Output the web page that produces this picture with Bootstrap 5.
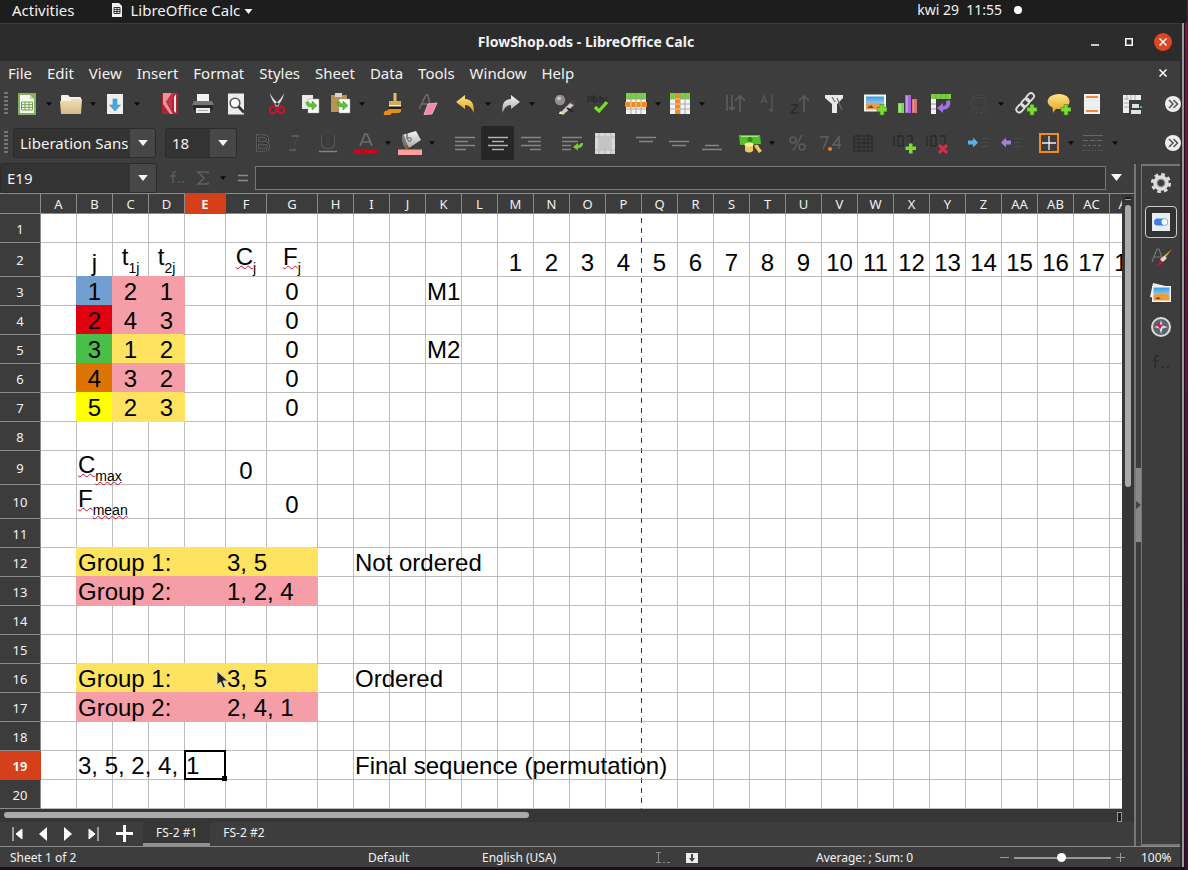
<!DOCTYPE html>
<html lang="en">
<head>
<meta charset="utf-8">
<meta name="viewport" content="width=device-width, initial-scale=1">
<title>FlowShop.ods - LibreOffice Calc</title>
<link rel="stylesheet" href="https://cdn.jsdelivr.net/npm/bootstrap@5.3.0/dist/css/bootstrap.min.css">
<style>
:root{--panel:#3d3d3d;--edge:#8b8b8b;--ink:#f2f2f2;--accent:#d5401b}
body{font-family:"Noto Sans","Open Sans",sans-serif;font-size:14px;line-height:20px;color:var(--ink);background:#25101f}
button{font:inherit;color:inherit;background:none;border:0;padding:0}
svg{display:block;flex:none}
.desk{padding-right:7px;padding-bottom:3px;background:linear-gradient(#7a1439,#3b0f30) right/3px 100% no-repeat,#1c0d1a}
.shell{background:var(--panel);border-right:1px solid #2b2b2b;box-shadow:1px 0 #2b2b2b,3px 0 #999}
.panelbar{height:23px;background:#1d1d1d;margin-right:-7px;padding-bottom:4px;position:relative}
.panelbar a,.menus a{color:var(--ink);text-decoration:none;font-size:15px}
.clock{padding-right:165px}
.titlebar{height:38px;background:#2d2c2c;border-top:1px solid #3b3b3b;font-weight:700;padding-bottom:2px}
.winspace{flex:1 1 0}
.winbtns{gap:16px;padding-right:8px}
.winbtns button{width:18px;height:18px;display:grid;place-items:center}
.winbtns .shut{background:#dc4620;border-radius:50%}
.menus{height:25px;padding:0 8px 2px}
.menus .nav{gap:15px}
.tools{height:36px;padding-left:4px;padding-right:3px}
.tools.fmt{height:42px}
.grip{width:4px;height:24px;margin-right:5px;background:repeating-linear-gradient(#777 0 2px,transparent 2px 4px)}
.tb{width:33px;height:34px;display:grid;place-items:center;flex:none}
.tb.main{width:28px}
.tb.drop{width:16px}
.tb.on{background:#262626;border-radius:2px}
.gap8{width:8px;flex:none}
.combo{height:30px;border:1px solid #2b2b2b;border-radius:3px;background:#333;display:flex;overflow:hidden}
.combo input,.line-in{background:#333;color:var(--ink);border:0;outline:0;min-width:0;width:100%;padding:0 0 0 6px}
.combo input{font-size:15px}
.combo button{width:26px;flex:none;background:#474747;display:grid;place-items:center}
.c-font{width:143px;margin-right:9px}.c-size{width:72px}.c-font button{width:25px}
.fbar{height:29px;padding-bottom:2px}
.c-name{width:157px;height:30px;margin-right:6px}
.work{min-width:0}
.line-in{height:24px;border:1px solid #777;margin-left:4px}
.sheet{overflow:hidden;background:#fff;min-width:0}
.grid{table-layout:fixed;border-collapse:separate;border-spacing:0;width:max(100%,1146px);color:#000;font-family:"Liberation Sans",Arial,sans-serif;font-size:24px;line-height:25px}
.grid col{width:36px}
.grid col.rh{width:41px}.grid col.w41{width:41px}.grid col.w51{width:51px}.grid col.rest{width:auto}
.grid col.brk{background:repeating-linear-gradient(transparent 0 5px,#333 5px 10px) right/1px 100% no-repeat}
.grid th{background:#3c3c3c;color:var(--ink);font:400 13px/18px "Noto Sans","Open Sans",sans-serif;text-align:center;vertical-align:middle;padding:0;border-right:1px solid var(--edge);border-bottom:1px solid var(--edge);overflow:hidden}
.grid thead th{height:21px;border-top:1px solid var(--edge)}
.grid tbody th{padding-top:1px}
.grid th.cur{background:var(--accent);font-weight:700;border-color:var(--accent)}
.grid td{height:29px;padding:0 1px 1px;vertical-align:bottom;white-space:nowrap;border-right:1px solid #bdbdbd;border-bottom:1px solid #bdbdbd}
.grid tr.tall td{height:34px}
.grid td.pb{border-right-color:transparent}
.grid td.mid{text-align:center}
.grid td.low{line-height:27px;vertical-align:top}
.grid td.fill{background:var(--f);border-color:var(--f);box-shadow:-1px -1px 0 var(--f)}
.grid td.pick{position:relative}
.pick i{position:absolute;inset:-1px;border:2px solid #000}
.pick i::after{content:"";position:absolute;right:-3px;bottom:-3px;width:5px;height:5px;background:#000}
.ptrbox{position:relative;height:25px}
.ptr{position:absolute;left:30px;top:4px}
.grid sub{font-size:14px;line-height:0;vertical-align:baseline;position:relative;top:8px;bottom:auto}
.sp{text-decoration:underline wavy #c8102e 1px;text-decoration-skip-ink:none;text-underline-offset:0}
.vbar{width:12px;flex:none;background:#363636;padding:3px 3px 0;border-top:1px solid var(--edge)}
.vbar b{display:block;height:3px;background:#1c1c1c;border-bottom:1px solid #999;margin-bottom:5px}
.vbar span{display:block;height:46%;width:6px;border-radius:3px;background:#aaa}
.hbar{height:13px;background:#363636;padding:3px 12px 0 4px;display:flex;justify-content:space-between}
.hbar span{width:47%;height:6px;border-radius:3px;background:#aaa}
.hbar b{width:5px;height:10px;background:#1c1c1c;border:1px solid #999}
.tabs{height:24px;font-size:12px;padding-left:5px}
.tabs .step{width:25px;height:24px;padding-bottom:1px;display:grid;place-items:center}
.tabs .add{width:38px}
.tabs .tab{height:24px;padding:0 13px;border-bottom:3px solid transparent;line-height:21px}
.tabs .tab.active{background:#363636;border-bottom-color:#8f8f8f}
.split{width:8px;flex:none;border-left:2px solid #777;border-right:1px solid #777;display:flex;align-items:center}
.split span{width:5px;height:74px;background:#888;display:grid;place-items:center}
.side{width:38px;flex:none;border-top:2px solid #777;border-bottom:2px solid #777;padding-top:1px;gap:3px}
.side button{width:32px;height:32px;display:grid;place-items:center}
.side .on{border:1px solid #ccc;border-radius:4px;background:#333;margin-top:4px}
.status{height:21px;border-top:1px solid var(--edge);font-size:12px;line-height:21px;display:grid;grid-template-columns:358fr 114fr 174fr 160fr 184fr 180px;padding-left:10px}
.zoomer{appearance:none;background:transparent;width:97px;height:14px;margin:0 5px}
.zoomer::-webkit-slider-runnable-track{height:2px;background:#999}
.zoomer::-webkit-slider-thumb{-webkit-appearance:none;width:9px;height:9px;border-radius:50%;background:#fff;margin-top:-4px}
</style>
</head>
<body>
<svg width="0" height="0" class="position-absolute" aria-hidden="true">
<defs>
<linearGradient id="gGold" x1="0" y1="0" x2="0" y2="1"><stop offset="0" stop-color="#ffe58a"/><stop offset="1" stop-color="#e0a11c"/></linearGradient>
<linearGradient id="gGrey" x1="0" y1="0" x2="0" y2="1"><stop offset="0" stop-color="#f4f4f4"/><stop offset="1" stop-color="#a9a9a9"/></linearGradient>
<linearGradient id="gSand" x1="0" y1="0" x2="0" y2="1"><stop offset="0" stop-color="#f3dfb9"/><stop offset="1" stop-color="#d8b987"/></linearGradient>
<linearGradient id="gSky" x1="0" y1="0" x2="0" y2="1"><stop offset="0" stop-color="#3b9be0"/><stop offset="1" stop-color="#d6efff"/></linearGradient>
</defs>
<symbol id="new" viewBox="0 0 24 24"><rect x="3" y="1" width="18" height="22" rx="1" fill="#83b064"/><path d="M5 3h10l4 4v14H5z" fill="#f5f9f0"/><path d="M15 3v4h4z" fill="#bcd6a6"/><path d="M6.500 10h11v8h-11zM6.500 12.700h11M6.500 15.400h11M10 10v8M14 10v8" fill="none" stroke="#6fa34c"/></symbol>
<symbol id="open" viewBox="0 0 24 24"><path d="M2 4q0-1 1-1h6l2 2h10q1 0 1 1v6H2z" fill="#f5f2ec"/><path d="M1 9h10l2-2h10l-1 15H2z" fill="url(#gSand)"/></symbol>
<symbol id="save" viewBox="0 0 24 24"><rect x="4" y="2" width="16" height="20" fill="#eee"/><path d="M10 7h4v6h3.500L12 19l-5.500-6H10z" fill="#46a9dc" stroke="#2b86b8" stroke-width=".5"/></symbol>
<symbol id="pdf" viewBox="0 0 24 24"><rect x="4" y="1" width="16" height="21" fill="#b32233"/><path d="M5 1h9L8 10l7 12h-3L5 12z" fill="#e8949c"/><path d="M14 1 8 10l6 8V9l3-8z" fill="#c43444"/><path d="m16 5 2-3v19l-2-2z" fill="#f0e9ea"/></symbol>
<symbol id="print" viewBox="0 0 24 24"><path d="M6 2h12v8H6z" fill="#f2f2f2"/><path d="M3 9h18l1.500 3v6h-21v-6z" fill="#777"/><path d="M1.500 13h21v5h-21z" fill="#2a2a2a"/><path d="M5 16h14v5H5z" fill="#eee"/><path d="M7 18.500h10" stroke="#aaa"/></symbol>
<symbol id="preview" viewBox="0 0 24 24"><rect x="4" y="1.500" width="16" height="21" fill="#ececec"/><circle cx="11" cy="11" r="4.800" fill="#fff" stroke="#555" stroke-width="1.600"/><path d="m14.500 14.500 5.500 6" stroke="#333" stroke-width="2.600"/></symbol>
<symbol id="cut" viewBox="0 0 24 24"><path d="M5 1q1 8 8 14l1.500-3Q8 8 5 1zM19 1q-1 8-8 14l-1.500-3Q16 8 19 1z" fill="#dedede"/><circle cx="8" cy="18" r="3.200" fill="none" stroke="#cf1028" stroke-width="2"/><circle cx="16" cy="18" r="3.200" fill="none" stroke="#cf1028" stroke-width="2"/></symbol>
<symbol id="copy" viewBox="0 0 24 24"><path d="M4 3h11v14H4z" fill="#e9e9e9"/><path d="M10 7h11v14H10z" fill="#fff" stroke="#999" stroke-width=".5"/><path d="M8 10q0 5 6 5v3l5-4.500L14 9v3q-3 0-3-2z" fill="#5cc532" stroke="#388b18" stroke-width=".5"/></symbol>
<symbol id="paste" viewBox="0 0 24 24"><path d="M3 3h16v17H3z" fill="#b89357"/><path d="M7 1h7v4H7z" fill="#d6d6d6"/><path d="M11 7h11v14H11z" fill="#fff" stroke="#999" stroke-width=".5"/><path d="M9 10q0 5 6 5v3l5-4.500L15 9v3q-3 0-3-2z" fill="#5cc532" stroke="#388b18" stroke-width=".5"/></symbol>
<symbol id="clone" viewBox="0 0 24 24"><path d="M10.500 1h3v8h-3z" fill="#e6bd6e"/><path d="M6 9h12v4H6z" fill="#d9a955"/><path d="M6 13h12v4H6z" fill="#1c1c1c"/><path d="M6 13h12v1.500H6z" fill="#eee"/><path d="M6 17h12q1 4-3 4H9l-2 2H1q-1-2 1-4 3 0 4-2z" fill="#e78c1b"/></symbol>
<symbol id="clear" viewBox="0 0 24 24"><path d="M3 17 10 3h2l2 10M6 12h7" fill="none" stroke="#707070" stroke-width="1.300"/><path d="m12 12 9-1-5 11-8 .500z" fill="#f287ae" stroke="#fbbcd2" stroke-width=".8"/></symbol>
<symbol id="undo" viewBox="0 0 24 24"><path d="M2 10 11 3v4q10 0 8.500 14Q17 13 11 13v4z" fill="url(#gGold)"/></symbol>
<symbol id="redo" viewBox="0 0 24 24"><path d="m22 10-9-7v4Q3 7 4.500 21 7 13 13 13v4z" fill="url(#gGrey)"/></symbol>
<symbol id="find" viewBox="0 0 24 24"><circle cx="7" cy="8" r="5.200" fill="#8f8f8f"/><circle cx="6" cy="6.500" r="2" fill="#c8c8c8"/><path d="m7 21 11-11 3 3L10 23z" fill="#d5c9c9"/><path d="m17 11 2-3 3 2-2 3z" fill="#4b4548"/><path d="m6 22 1-3 3 3z" fill="#fff4a5"/><path d="m14 16 6 4" stroke="#252525" stroke-width="2"/></symbol>
<symbol id="spell" viewBox="0 0 24 24"><path d="M2 10V5h4v5M2 8h4M8 3v7h3V6H8M14 4v6h3V6h-3M20 5v5h3" fill="none" stroke="#262626" stroke-width="1.200"/><path d="m9 15 4 4 8-9" fill="none" stroke="#79df2c" stroke-width="3.200"/></symbol>
<symbol id="rows" viewBox="0 0 24 24"><path d="M2 1h20v21H2z" fill="#f4f4f4"/><path d="M2 1h20v6H2z" fill="#74d23a"/><path d="M7 1v21M12 1v21M17 1v21M2 7h20M2 17h20" stroke="#999" stroke-width=".8"/><path d="M1 10h22v5H1z" fill="#f08a24"/><path d="M7 10v5M12 10v5M17 10v5" stroke="#ffc68a"/></symbol>
<symbol id="cols" viewBox="0 0 24 24"><path d="M2 1h20v21H2z" fill="#f4f4f4"/><path d="M2 1h20v6H2z" fill="#74d23a"/><path d="M12 1v21M17 1v21M2 7h20M2 12h20M2 17h20" stroke="#999" stroke-width=".8"/><path d="M7 1h5v21H7z" fill="#f08a24"/><path d="M7 7h5M7 12h5M7 17h5" stroke="#ffc68a"/></symbol>
<symbol id="sort" viewBox="0 0 24 24"><path d="M4 3v16M9 3v15M6 15l3 3 3-3M17 20V4M12 9l5-5 5 5" fill="none" stroke="#5c5c5c" stroke-width="1.700"/></symbol>
<symbol id="sasc" viewBox="0 0 24 24"><path d="m5 11 3-7 3 7M6 9h4M16 3v17M13 17l3 3" fill="none" stroke="#555" stroke-width="1.500"/></symbol>
<symbol id="sdesc" viewBox="0 0 24 24"><path d="M2 13h7l-7 8h8" fill="none" stroke="#2c2c2c" stroke-width="1.400"/><path d="M15 20V4M10 9l5-5 5 5" fill="none" stroke="#5b5b5b" stroke-width="1.700"/></symbol>
<symbol id="filter" viewBox="0 0 24 24"><path d="M3 3h18v3l-6 6v9h-5v-9L3 6z" fill="#e9e9e9"/><path d="m15 6 5 12M10 5l3 5" stroke="#6c6c6c" stroke-width="1.200"/></symbol>
<symbol id="pic" viewBox="0 0 24 24"><rect x="1" y="2.500" width="22" height="17" fill="#f6f6f6"/><path d="M3 4.500h18v13H3z" fill="url(#gSky)"/><path d="M3 12q9-2 18 0v5.500H3z" fill="#eb9b4c"/><path d="m4 16 4-3 3 3z" fill="#a43d18"/><path d="M17 12.500h4v3h3v4h-3v3.500h-4v-3.500h-3v-4h3z" fill="#7cdb38" stroke="#3a8a14" stroke-width=".6"/></symbol>
<symbol id="chart" viewBox="0 0 24 24"><path d="M2 11h6v10H2z" fill="#84d35a"/><path d="M9 3h6v18H9z" fill="#a468d8"/><path d="M16 7h5v14h-5z" fill="#d97476"/><path d="M3 12h2v8H3zM10 4h2v16h-2zM17 8h1v12h-1z" fill="#fff" opacity=".3"/></symbol>
<symbol id="pivot" viewBox="0 0 24 24"><path d="M2 2h20v5H2z" fill="#74d23a"/><path d="M2 7h5v15H2z" fill="#f1f1f1"/><path d="M7 2v5M12 2v5M17 2v5M2 12h5M2 17h5" stroke="#8a8a8a" stroke-width=".8"/><path d="M21 8q2 9-7 10v3l-6-5 6-5v3q4 0 3-5z" fill="#a071e0"/></symbol>
<symbol id="omega" viewBox="0 0 24 24"><path d="M4 20h5v-3q-4-2-4-7 0-6 7-6t7 6q0 5-4 7v3h5" fill="none" stroke="#4f4f4f" stroke-width="2.500"/><path d="M4 20h5v-3q-4-2-4-7 0-6 7-6t7 6q0 5-4 7v3h5" fill="none" stroke="#2e2e2e"/></symbol>
<symbol id="link" viewBox="0 0 24 24"><g fill="none" stroke="#ddd" stroke-width="1.900"><rect x="12" y="2.500" width="9" height="6" rx="3" transform="rotate(-48 16 6)"/><rect x="7" y="8" width="9" height="6" rx="3" transform="rotate(-48 11 11)"/><rect x="1.500" y="13.500" width="9" height="6" rx="3" transform="rotate(-48 6 16)"/></g><path d="M16 12.500h4v3h3v4h-3v3.500h-4v-3.500h-3v-4h3z" fill="#7cdb38" stroke="#3a8a14" stroke-width=".6"/></symbol>
<symbol id="note" viewBox="0 0 24 24"><path d="M12 2c14 0 14 15 0 15-1 0-2 0-3-.300L6 21l-.500-5.500C-3 12 0 2 12 2z" fill="url(#gGold)"/><path d="M17 12.500h4v3h3v4h-3v3.500h-4v-3.500h-3v-4h3z" fill="#7cdb38" stroke="#3a8a14" stroke-width=".6"/></symbol>
<symbol id="head" viewBox="0 0 24 24"><path d="M4 2h16v20H4z" fill="#eee"/><path d="M6 5h12M6 19h12" stroke="#ea8a3c" stroke-width="2.200"/></symbol>
<symbol id="area" viewBox="0 0 24 24"><path d="M2 3h18v5H8v13H2z" fill="#eee"/><path d="M6 3v5M10 3v5M14 3v5M3 7h5M3 11h5M3 15h5" stroke="#999" stroke-width=".8"/><path d="M11 12h7v4h-7zM10 18h10v4H10z" fill="#e0e0e0"/><path d="M19 15h2" stroke="#31c3ae" stroke-width="2"/></symbol>
<symbol id="more" viewBox="0 0 24 24"><circle cx="12" cy="12" r="8" fill="#eee"/><path d="m8 8 4 4-4 4M12.500 8l4 4-4 4" fill="none" stroke="#555" stroke-width="1.600"/></symbol>
<symbol id="bold" viewBox="0 0 24 24"><path d="M7.500 5h5q5 0 5 3.500T12.500 12h-5zM7.500 12h6q5 0 5 3.500T13.500 19h-6z" fill="none" stroke="#6a6a6a" stroke-width="2.800"/><path d="M7.500 5h5q5 0 5 3.500T12.500 12h-5zM7.500 12h6q5 0 5 3.500T13.500 19h-6z" fill="none" stroke="#303030" stroke-width="1.300"/></symbol>
<symbol id="ital" viewBox="0 0 24 24"><path d="M9 5h7M6 19h7M13.500 5l-4 14" fill="none" stroke="#585858" stroke-width="1.800"/><path d="m13 6-3.500 12" stroke="#2e2e2e"/></symbol>
<symbol id="under" viewBox="0 0 24 24"><path d="M6 4v8q0 5 6 5t6-5V4" fill="none" stroke="#565656" stroke-width="2"/><path d="M7 4v8q0 4 5 4t5-4V4" fill="none" stroke="#2f2f2f"/><path d="M3 20.500h18" stroke="#808080" stroke-width="1.500"/></symbol>
<symbol id="fcol" viewBox="0 0 24 24"><path d="m6 15 5-12h2l5 12M8 11h8" fill="none" stroke="#6d6d6d" stroke-width="1.700"/><path d="M0 18.500h24V23H0z" fill="#d0021b"/></symbol>
<symbol id="bcol" viewBox="0 0 24 24"><path d="m4 4 14-4 5 9-12 8z" fill="url(#gGrey)"/><path d="M9 2v6" stroke="#555" stroke-width="1.200"/><circle cx="11.500" cy="8.500" r="1.800" fill="none" stroke="#555"/><path d="M4 4q-1 6 3 13h3L6 4z" fill="#777"/><path d="M7 14h3v4H7z" fill="#b04b28"/><path d="M0 18.500h24V24H0z" fill="#ff9c9c"/></symbol>
<symbol id="al" viewBox="0 0 24 24"><path d="M2 6.500h20M2 10.500h13M2 14.500h20M2 18.500h11" stroke="#858585" stroke-width="1.300"/></symbol>
<symbol id="ac" viewBox="0 0 24 24"><path d="M2 6.500h20M6 10.500h12M2 14.500h20M6 18.500h12" stroke="#b0b0b0" stroke-width="1.300"/></symbol>
<symbol id="ar" viewBox="0 0 24 24"><path d="M2 6.500h20M9 10.500h13M2 14.500h20M11 18.500h11" stroke="#858585" stroke-width="1.300"/></symbol>
<symbol id="wrap" viewBox="0 0 24 24"><path d="M2 6.500h20M2 10.500h16M2 14.500h9M2 18.500h9" stroke="#858585" stroke-width="1.300"/><path d="M23 12q0 5-5 5v2.500L13 16l5-4v2q2 0 3-2z" fill="#72cf35"/></symbol>
<symbol id="merge" viewBox="0 0 24 24"><path d="M2 2h20v21H2z" fill="#d8d8d8"/><path d="M2 6h20M2 19h20M6 2v21M18 2v21M12 2v4M12 19v4" stroke="#b8b8b8"/><path d="M6 6h12v13H6z" fill="#c3c3c3"/></symbol>
<symbol id="vt" viewBox="0 0 24 24"><path d="M2 6.500h20M5 10.500h14" stroke="#858585" stroke-width="1.300"/></symbol>
<symbol id="vm" viewBox="0 0 24 24"><path d="M2 10.500h20M5 14.500h14" stroke="#858585" stroke-width="1.300"/></symbol>
<symbol id="vb" viewBox="0 0 24 24"><path d="M5 14.500h14M2 18.500h20" stroke="#858585" stroke-width="1.300"/></symbol>
<symbol id="money" viewBox="0 0 24 24"><path d="M1 4h21l1 9-21 1z" fill="#55bf2a"/><path d="M3 5.500h17" stroke="#a7ea79"/><circle cx="12" cy="8.500" r="2.500" fill="#2c8a17"/><path d="M7 13h8v7q-4 3-8 0z" fill="#efc85d"/><ellipse cx="11" cy="13.500" rx="4.500" ry="2" fill="#ffe9a0"/><path d="M16 15q4-3 5 1l3 4-3 2z" fill="#efc85d"/></symbol>
<symbol id="pct" viewBox="0 0 24 24"><g fill="none" stroke="#5c5c5c" stroke-width="1.500"><circle cx="8" cy="9" r="3"/><circle cx="17" cy="16" r="3"/><path d="m17 4-9 16"/></g></symbol>
<symbol id="dec" viewBox="0 0 24 24"><g fill="none" stroke="#606060" stroke-width="1.500"><path d="M2 6h8L5 18M21 18V6l-6 8h8"/></g><circle cx="12" cy="18" r="2" fill="#ef7c32"/></symbol>
<symbol id="date" viewBox="0 0 24 24"><path d="M3 5h18v15H3zM3 8h18M3 12h18M3 16h18M8 8v12M13 8v12M17 8v12M7 3v4M17 3v4" fill="none" stroke="#262626"/></symbol>
<symbol id="dadd" viewBox="0 0 24 24"><path d="M2 5v10M6 5h5v10H6zM15 5h5v8" fill="none" stroke="#292929" stroke-width="1.300"/><path d="M17 12.500h3.500v3H24V19h-3.500v3.500H17V19h-3.500v-3.500H17z" fill="#7cdb38"/></symbol>
<symbol id="ddel" viewBox="0 0 24 24"><path d="M2 5v10M6 5h5v10H6zM15 5h5v8" fill="none" stroke="#292929" stroke-width="1.300"/><path d="m14 14 8 8M22 14l-8 8" stroke="#dc2b42" stroke-width="3"/></symbol>
<symbol id="indent" viewBox="0 0 24 24"><path d="M2 9.500h5V6.500l5 5-5 5v-3H2z" fill="#55b4ea"/><path d="M15 7.500h9M15 11.500h6M15 15.500h8" stroke="#4b4b4b" stroke-width="1.200"/></symbol>
<symbol id="outd" viewBox="0 0 24 24"><path d="M12 9.500H7V6.500l-5 5 5 5v-3h5z" fill="#a77be2"/><path d="M15 7.500h9M15 11.500h6M15 15.500h8" stroke="#4b4b4b" stroke-width="1.200"/></symbol>
<symbol id="border" viewBox="0 0 24 24"><path d="M3 3h18v18H3z" fill="none" stroke="#f28a1c" stroke-width="2"/><path d="M12 5v14M5 12h14" stroke="#eee" stroke-width="1.300"/></symbol>
<symbol id="bstyle" viewBox="0 0 24 24"><path d="M2 4.500h20" stroke="#666"/><path d="M2 9.500h20" stroke="#666" stroke-dasharray="5 2"/><path d="M2 14.500h20" stroke="#666" stroke-dasharray="3 2"/><path d="M2 19.500h20" stroke="#666" stroke-dasharray="1 2"/></symbol>
<symbol id="caret" viewBox="0 0 8 5"><path d="M0 0h8L4 5z" fill="#0d0d0d"/></symbol>
<symbol id="caretL" viewBox="0 0 8 5"><path d="M0 0h8L4 5z" fill="#f5f5f5"/></symbol>
</svg>

<div class="desk d-flex flex-column min-vh-100">
<div class="shell d-flex flex-column flex-grow-1">
  <header class="panelbar d-flex align-items-center justify-content-between">
    <div class="d-flex align-items-center">
      <a href="#" class="ps-2 ms-1 me-4 pe-2">Activities</a>
      <a href="#" class="d-flex align-items-center gap-2 ms-1">
        <svg width="12" height="14" viewBox="0 0 12 14"><path d="M1 0h7l3 3v11H1z" fill="#f2f2f2"/><path d="M3 4.500h6v6H3zM3 6.500h6M3 8.500h6M6 4.500v6" fill="none" stroke="#222" stroke-width=".9"/></svg>
        <span>LibreOffice Calc <svg class="d-inline-block align-middle" width="9" height="5"><use href="#caretL"/></svg></span>
      </a>
    </div>
    <div class="clock d-flex align-items-center gap-2"><time>kwi 29 &nbsp;11:55</time><svg class="ms-1" width="8" height="8"><circle cx="4" cy="4" r="4" fill="#fff"/></svg></div>
  </header>

  <div class="titlebar d-flex align-items-center">
    <div class="winspace"></div>
    <div>FlowShop.ods - LibreOffice Calc</div>
    <div class="winspace winbtns d-flex justify-content-end">
      <button aria-label="Minimize"><svg width="8" height="8"><path d="M0 7h8" stroke="#fff" stroke-width="1.500"/></svg></button>
      <button aria-label="Maximize"><svg width="8" height="8"><path d="M.750.750h6.500v6.500H.750z" fill="none" stroke="#fff" stroke-width="1.500"/></svg></button>
      <button class="shut" aria-label="Close"><svg width="8" height="8"><path d="m.500.500 7 7M7.500.500l-7 7" stroke="#fff" stroke-width="1.500"/></svg></button>
    </div>
  </div>

  <nav class="menus d-flex align-items-center justify-content-between">
    <div class="nav flex-nowrap">
      <a href="#">File</a><a href="#">Edit</a><a href="#">View</a><a href="#">Insert</a><a href="#">Format</a><a href="#">Styles</a><a href="#">Sheet</a><a href="#">Data</a><a href="#">Tools</a><a href="#">Window</a><a href="#">Help</a>
    </div>
    <button class="px-1" aria-label="Close document"><svg width="9" height="8"><path d="m.500.500 7 7M7.500.500l-7 7" stroke="#fff" stroke-width="1.500"/></svg></button>
  </nav>

  <div class="tools d-flex align-items-center" id="standardBar" role="toolbar" aria-label="Standard"><span class="grip"></span></div>
  <div class="tools fmt d-flex align-items-center" id="formatBar" role="toolbar" aria-label="Formatting">
    <span class="grip"></span>
    <div class="combo c-font flex-shrink-0"><input aria-label="Font name" value="Liberation Sans"><button aria-label="Show fonts"><svg width="10" height="6"><use href="#caretL"/></svg></button></div>
    <div class="combo c-size flex-shrink-0"><input aria-label="Font size" value="18"><button aria-label="Show sizes"><svg width="10" height="6"><use href="#caretL"/></svg></button></div>
    <span class="gap8"></span>
  </div>

  <div class="d-flex flex-grow-1">
    <main class="work d-flex flex-column flex-grow-1">
      <div class="fbar d-flex align-items-center">
        <div class="combo c-name flex-shrink-0"><input aria-label="Name box" value="E19"><button aria-label="Show names"><svg width="10" height="6"><use href="#caretL"/></svg></button></div>
        <button class="tb main" aria-label="Function wizard"><svg width="18" height="16" viewBox="0 0 18 16"><path d="M8 2Q5 1 5 5v8M2 6h6M10 12h2m2 0h2" fill="none" stroke="#5a5a5a" stroke-width="1.600"/></svg></button>
        <button class="tb main pe-1" aria-label="Sum"><svg width="14" height="16" viewBox="0 0 14 16"><path d="M12 4V2H2l6 6-6 6h10v-2" fill="none" stroke="#5e5e5e" stroke-width="1.600"/></svg></button>
        <button class="tb drop pe-2" aria-label="Sum options"><svg width="6" height="4"><use href="#caret"/></svg></button>
        <button class="tb drop" aria-label="Formula"><svg width="10" height="8"><path d="M0 1.500h10M0 6.500h10" stroke="#8a8a8a" stroke-width="1.500"/></svg></button>
        <input class="line-in" aria-label="Input line">
        <button class="tb main pe-2" aria-label="Expand formula bar"><svg width="11" height="7"><use href="#caretL"/></svg></button>
      </div>
      <div class="d-flex flex-grow-1">
        <div class="sheet flex-grow-1"><table class="grid" id="grid"></table></div>
        <div class="vbar"><b></b><span></span></div>
      </div>
      <div class="hbar"><span></span><b></b></div>
      <div class="tabs d-flex">
        <button class="step" aria-label="First sheet"><svg width="12" height="14"><path d="M1 0v14M10 2v10L4 7z" fill="#fff" stroke="#fff" stroke-width="1"/></svg></button>
        <button class="step" aria-label="Previous sheet"><svg width="10" height="14"><path d="M9 0v14L1 7z" fill="#fff"/></svg></button>
        <button class="step" aria-label="Next sheet"><svg width="10" height="14"><path d="M1 0v14l8-7z" fill="#fff"/></svg></button>
        <button class="step" aria-label="Last sheet"><svg width="12" height="14"><path d="M11 0v14M2 2v10l6-5z" fill="#fff" stroke="#fff" stroke-width="1"/></svg></button>
        <button class="step add" aria-label="Add sheet"><svg width="17" height="17"><path d="M8.500 0v17M0 8.500h17" stroke="#fff" stroke-width="3"/></svg></button>
        <button class="tab active">FS-2 #1</button>
        <button class="tab">FS-2 #2</button>
      </div>
    </main>
    <div class="split"><span><svg width="5" height="8"><path d="M0 0v8l5-4z" fill="#444"/></svg></span></div>
    <aside class="side d-flex flex-column align-items-center">
      <button aria-label="Sidebar settings"><svg width="22" height="22" viewBox="0 0 24 24"><circle cx="12" cy="12" r="8.500" fill="#ddd"/><circle cx="12" cy="12" r="9.500" fill="none" stroke="#ddd" stroke-width="3" stroke-dasharray="4 3.460"/><circle cx="12" cy="12" r="4" fill="#3a3a3a" stroke="#888" stroke-width="1.500"/></svg></button>
      <button class="on" aria-label="Properties"><svg width="20" height="20" viewBox="0 0 20 20"><path d="M1 1h18v18H1z" fill="#e8eef5"/><rect x="3" y="6.500" width="14" height="7" rx="3.500" fill="#3c7fe0"/><circle cx="13.500" cy="10" r="3" fill="#fff"/></svg></button>
      <button aria-label="Styles"><svg width="24" height="24" viewBox="0 0 24 24"><path d="M3 17 8 4h2l4 12M5 12h8" fill="none" stroke="#777" stroke-width="1.200"/><path d="m23 4-9 12-3-2z" fill="#d99a3a"/><path d="m15 11 3 2-4 4-3-2z" fill="#ddd"/><path d="M7 20q3 0 4-5l3 2q-2 5-7 3z" fill="#b5183b"/></svg></button>
      <button aria-label="Gallery"><svg width="24" height="24" viewBox="0 0 24 24"><path d="m4 3 17 4-2 13L1 17z" fill="#eee"/><path d="M3 6h19v16H3z" fill="#f6f6f6"/><path d="M4.500 7.500h16v13h-16z" fill="url(#gSky)"/><path d="M4.500 15q8-3 16 0v5.500h-16z" fill="#ef9e36"/><path d="m6 19 3-2 3 2z" fill="#7a3e10"/></svg></button>
      <button aria-label="Navigator"><svg width="24" height="24" viewBox="0 0 24 24"><circle cx="12" cy="12" r="9" fill="#5b6572" stroke="#ddd" stroke-width="2"/><path d="m12 5 1.500 5.500L19 12l-5.500 1.500L12 19l-1.500-5.500L5 12l5.500-1.500z" fill="#ddd"/><path d="m6 8 8 2-3 4z" fill="#d11f4d"/></svg></button>
      <button aria-label="Functions"><svg width="24" height="24" viewBox="0 0 24 24"><path d="M10 6Q6 5 6 9v9M4 11h6M12 17h3m2 0h3" fill="none" stroke="#2b2b2b" stroke-width="1.600"/></svg></button>
    </aside>
  </div>

  <footer class="status">
    <span>Sheet 1 of 2</span><span>Default</span><span>English (USA)</span>
    <span class="d-flex align-items-center gap-3"><svg width="14" height="12"><path d="M0 .500h5M0 10.500h5M2.500 0v11M7 10.500h2M11 10.500h3" stroke="#888"/></svg><svg width="12" height="10"><path d="M0 0h12v10H0z" fill="#eee"/><path d="M5 1h2v4h2L6 9 3 5h2z" fill="#444"/></svg></span>
    <span>Average: ; Sum: 0</span>
    <span class="d-flex align-items-center"><button aria-label="Zoom out"><svg width="9" height="9"><path d="M0 4.500h9" stroke="#999"/></svg></button><input class="zoomer" type="range" aria-label="Zoom" min="0" max="100" value="49"><button aria-label="Zoom in"><svg width="9" height="9"><path d="M0 4.500h9M4.500 0v9" stroke="#999"/></svg></button><span class="ms-3">100%</span></span>
  </footer>
</div>
</div>

<script src="https://cdn.jsdelivr.net/npm/bootstrap@5.3.0/dist/js/bootstrap.bundle.min.js"></script>
<script>
// Toolbars: "name+" is a split button with a drop-down arrow, "|" a gap, "*" the pressed state.
function fillBar(id, list) {
  const icon = n => `<svg width="24" height="24"><use href="#${n}"/></svg>`;
  const html = list.trim().split(/\s+/).map(t => {
    if (t === '|') return '<span class="gap8"></span>';
    const n = t.replace(/[+*]/g, '');
    if (t.endsWith('+')) return `<button class="tb main" aria-label="${n}">${icon(n)}</button><button class="tb drop" aria-label="${n} options"><svg width="6" height="4"><use href="#caret"/></svg></button>`;
    return `<button class="tb${t.endsWith('*') ? ' on' : ''}" aria-label="${n}">${icon(n)}</button>`;
  }).join('');
  document.getElementById(id).insertAdjacentHTML('beforeend', html +
    '<button class="tb drop ms-auto" aria-label="More controls"><svg width="24" height="24"><use href="#more"/></svg></button>');
}
fillBar('standardBar', 'new+ open+ save+ | pdf print preview | cut copy paste+ | clone clear | undo+ redo+ | find spell | rows+ cols+ | sort sasc sdesc filter | pic chart pivot | omega+ link note head | area');
fillBar('formatBar', 'bold ital under | fcol+ bcol+ | al ac* ar | wrap merge | vt vm vb | money+ pct dec date | dadd ddel | indent outd | border+ bstyle+');

// Sheet contents
const cols = [...'ABCDEFGHIJKLMNOPQRSTUVWXYZ', 'AA', 'AB', 'AC', 'AD'];
const P = '#f69ea8', Y = '#fde35f';
const cells = {}, fills = {}, centred = new Set();
const mid = (k, v) => { cells[k] = v; centred.add(k); };
mid('B2', 'j');
mid('C2', 't<sub>1j</sub>'); mid('D2', 't<sub>2j</sub>');
mid('F2', '<span class="sp">C</span><sub>j</sub>'); mid('G2', '<span class="sp">F</span><sub>j</sub>');
cols.slice(12).forEach((c, i) => mid(c + 2, i + 1));
[[1, 2, 1, '#729fcf', P], [2, 4, 3, '#e0000f', P], [3, 1, 2, '#49bf49', Y], [4, 3, 2, '#dd7300', P], [5, 2, 3, '#ffff00', Y]].forEach((r, i) => {
  const n = i + 3;
  mid('B' + n, r[0]); mid('C' + n, r[1]); mid('D' + n, r[2]); mid('G' + n, 0);
  fills['B' + n] = r[3]; fills['C' + n] = fills['D' + n] = r[4];
});
mid('K3', 'M1'); mid('K5', 'M2'); mid('F9', 0); mid('G10', 0);
cells.B9 = '<span class="sp">C</span><sub class="sp">max</sub>';
cells.B10 = '<span class="sp">F</span><sub class="sp">mean</sub>';
[[12, '3, 5', '1, 2, 4', 'Not ordered'], [16, '3, 5', '2, 4, 1', 'Ordered']].forEach(([n, a, b, note]) => {
  cells['B' + n] = 'Group 1:'; cells['F' + n] = a; cells['I' + n] = note;
  cells['B' + (n + 1)] = 'Group 2:'; cells['F' + (n + 1)] = b;
  for (const c of 'BCDEFG') { fills[c + n] = Y; fills[c + (n + 1)] = P; }
});
cells.B19 = '3, 5, 2, 4,'; cells.E19 = '1<i></i>'; cells.I19 = 'Final sequence (permutation)';
cells.E16 = '<div class="ptrbox"><svg class="ptr" width="13" height="19" viewBox="0 0 13 19"><path d="M1 1v14l3.500-3 2.500 6 2.500-1L7 11h5z" fill="#222" stroke="#ddd"/></svg></div>';

const colClass = { E: 'w41', F: 'w41', G: 'w51', P: 'brk', AD: 'rest' };
let html = '<colgroup><col class="rh">' + cols.map(c => `<col class="${colClass[c] || ''}">`).join('') + '</colgroup><thead><tr><th></th>' +
  cols.map(c => `<th scope="col"${c === 'E' ? ' class="cur"' : ''}>${c}</th>`).join('') + '</tr></thead><tbody>';
for (let r = 1; r <= 20; r++) {
  html += `<tr${[2, 9, 10].includes(r) ? ' class="tall"' : ''}><th scope="row"${r === 19 ? ' class="cur"' : ''}>${r}</th>`;
  for (const c of cols) {
    const k = c + r, cl = [];
    if (centred.has(k)) cl.push('mid');
    if (fills[k]) cl.push('fill');
    if (c === 'P') cl.push('pb');
    if (/sub/.test(cells[k] || '')) cl.push('low');
    if (k === 'E19') cl.push('pick');
    html += `<td class="${cl.join(' ')}"${fills[k] ? ` style="--f:${fills[k]}"` : ''}>${cells[k] ?? ''}</td>`;
  }
  html += '</tr>';
}
document.getElementById('grid').innerHTML = html + '</tbody>';
</script>
</body>
</html>
